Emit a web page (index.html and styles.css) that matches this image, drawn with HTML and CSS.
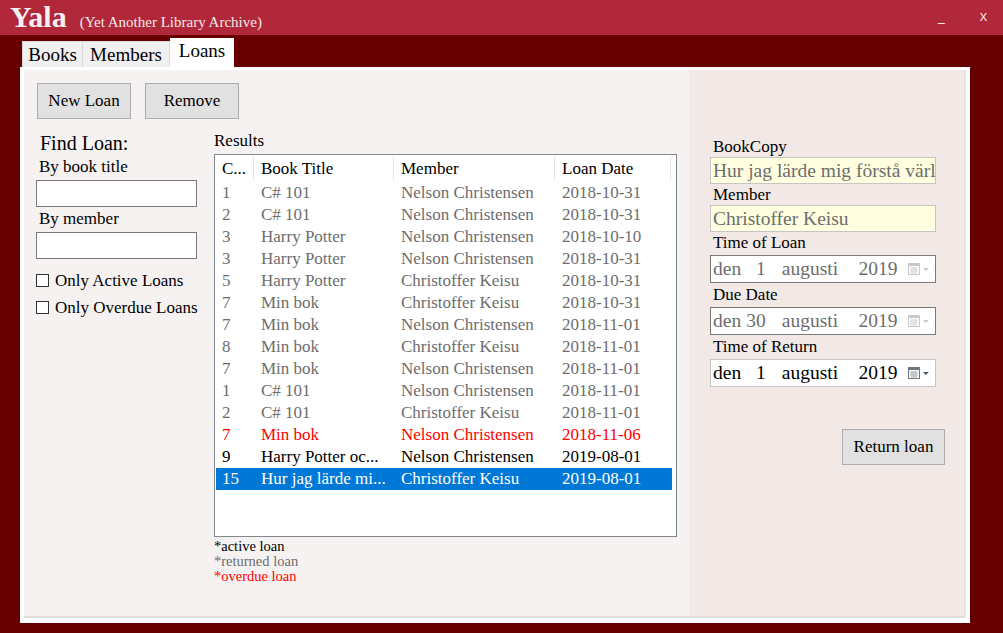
FILE: index.html
```html
<!DOCTYPE html>
<html>
<head>
<meta charset="utf-8">
<title>Yala</title>
<link rel="stylesheet" href="styles.css">
</head>
<body>
<div class="titlebar">
  <span class="app-name">Yala</span>
  <span class="app-sub">(Yet Another Library Archive)</span>
  <span class="win-min">_</span>
  <span class="win-close">X</span>
</div>
<div class="tabs">
  <div class="tab tab-books">Books</div>
  <div class="tab tab-members">Members</div>
  <div class="tab tab-loans active">Loans</div>
</div>
<div class="panel">
  <div class="main">
    <div class="btn-row">
      <button class="btn">New Loan</button>
      <button class="btn">Remove</button>
    </div>
    <div class="work">
      <div class="find">
        <div class="find-title">Find Loan:</div>
        <div class="flabel">By book title</div>
        <div class="tbox"></div>
        <div class="flabel">By member</div>
        <div class="tbox"></div>
        <div class="check"><span class="cbox"></span>Only Active Loans</div>
        <div class="check"><span class="cbox"></span>Only Overdue Loans</div>
      </div>
      <div class="results">
        <div class="rlabel">Results</div>
        <div class="list">
          <div class="lrow head">
            <span class="c1">C...</span><span class="c2">Book Title</span><span class="c3">Member</span><span class="c4">Loan Date</span>
          </div>
          <div class="lrow ret"><span class="c1">1</span><span class="c2">C# 101</span><span class="c3">Nelson Christensen</span><span class="c4">2018-10-31</span></div>
          <div class="lrow ret"><span class="c1">2</span><span class="c2">C# 101</span><span class="c3">Nelson Christensen</span><span class="c4">2018-10-31</span></div>
          <div class="lrow ret"><span class="c1">3</span><span class="c2">Harry Potter</span><span class="c3">Nelson Christensen</span><span class="c4">2018-10-10</span></div>
          <div class="lrow ret"><span class="c1">3</span><span class="c2">Harry Potter</span><span class="c3">Nelson Christensen</span><span class="c4">2018-10-31</span></div>
          <div class="lrow ret"><span class="c1">5</span><span class="c2">Harry Potter</span><span class="c3">Christoffer Keisu</span><span class="c4">2018-10-31</span></div>
          <div class="lrow ret"><span class="c1">7</span><span class="c2">Min bok</span><span class="c3">Christoffer Keisu</span><span class="c4">2018-10-31</span></div>
          <div class="lrow ret"><span class="c1">7</span><span class="c2">Min bok</span><span class="c3">Nelson Christensen</span><span class="c4">2018-11-01</span></div>
          <div class="lrow ret"><span class="c1">8</span><span class="c2">Min bok</span><span class="c3">Christoffer Keisu</span><span class="c4">2018-11-01</span></div>
          <div class="lrow ret"><span class="c1">7</span><span class="c2">Min bok</span><span class="c3">Nelson Christensen</span><span class="c4">2018-11-01</span></div>
          <div class="lrow ret"><span class="c1">1</span><span class="c2">C# 101</span><span class="c3">Nelson Christensen</span><span class="c4">2018-11-01</span></div>
          <div class="lrow ret"><span class="c1">2</span><span class="c2">C# 101</span><span class="c3">Christoffer Keisu</span><span class="c4">2018-11-01</span></div>
          <div class="lrow over"><span class="c1">7</span><span class="c2">Min bok</span><span class="c3">Nelson Christensen</span><span class="c4">2018-11-06</span></div>
          <div class="lrow act"><span class="c1">9</span><span class="c2">Harry Potter oc...</span><span class="c3">Nelson Christensen</span><span class="c4">2019-08-01</span></div>
          <div class="lrow sel"><span class="c1">15</span><span class="c2">Hur jag lärde mi...</span><span class="c3">Christoffer Keisu</span><span class="c4">2019-08-01</span></div>
        </div>
        <div class="legend">
          <div class="lg-act">*active loan</div>
          <div class="lg-ret">*returned loan</div>
          <div class="lg-over">*overdue loan</div>
        </div>
      </div>
    </div>
  </div>
  <div class="side">
    <div class="slabel">BookCopy</div>
    <div class="ybox">Hur jag lärde mig förstå värl</div>
    <div class="slabel">Member</div>
    <div class="ybox">Christoffer Keisu</div>
    <div class="slabel">Time of Loan</div>
    <div class="picker off">
      <span class="p-den">den</span><span class="p-day">1</span><span class="p-mon">augusti</span><span class="p-year">2019</span>
      <svg class="p-ico" width="22" height="13" viewBox="0 0 22 13"><rect x="0.5" y="0.5" width="11" height="11" fill="#fff" stroke="currentColor"/><rect x="1" y="1" width="10" height="2" fill="currentColor"/><path d="M2 5h8M2 7h8M2 9h8M4 4v7M6 4v7M8 4v7" stroke="currentColor" stroke-width="0.6" fill="none"/><path d="M15 5h6l-3 3z" fill="currentColor"/></svg>
    </div>
    <div class="slabel">Due Date</div>
    <div class="picker off">
      <span class="p-den">den</span><span class="p-day">30</span><span class="p-mon">augusti</span><span class="p-year">2019</span>
      <svg class="p-ico" width="22" height="13" viewBox="0 0 22 13"><rect x="0.5" y="0.5" width="11" height="11" fill="#fff" stroke="currentColor"/><rect x="1" y="1" width="10" height="2" fill="currentColor"/><path d="M2 5h8M2 7h8M2 9h8M4 4v7M6 4v7M8 4v7" stroke="currentColor" stroke-width="0.6" fill="none"/><path d="M15 5h6l-3 3z" fill="currentColor"/></svg>
    </div>
    <div class="slabel">Time of Return</div>
    <div class="picker on">
      <span class="p-den">den</span><span class="p-day">1</span><span class="p-mon">augusti</span><span class="p-year">2019</span>
      <svg class="p-ico" width="22" height="13" viewBox="0 0 22 13"><rect x="0.5" y="0.5" width="11" height="11" fill="#fff" stroke="#6b7380"/><rect x="1" y="1" width="10" height="2" fill="#6b7380"/><path d="M2 5h8M2 7h8M2 9h8M4 4v7M6 4v7M8 4v7" stroke="#8a909a" stroke-width="0.6" fill="none"/><path d="M15 5h6l-3 3z" fill="#4a5060"/></svg>
    </div>
    <div class="ret-row"><button class="btn btn-ret">Return loan</button></div>
  </div>
</div>
</body>
</html>
```
FILE: styles.css
```css
* { box-sizing: border-box; }
html, body { margin: 0; padding: 0; }
body {
  background: #660000;
  width: 1003px;
  height: 633px;
  overflow: hidden;
  font-family: "Liberation Serif", "DejaVu Serif", serif;
  color: #000;
}
.titlebar {
  height: 35px;
  background: #b0283a;
  display: flex;
  align-items: baseline;
  padding-left: 10px;
  color: #fff;
}
.app-name {
  font-weight: bold;
  font-size: 30px;
  line-height: 34px;
  color: #f6f0f0;
}
.app-sub {
  font-size: 15px;
  margin-left: 13px;
  color: #f4eaea;
}
.win-min, .win-close {
  font-family: "Liberation Sans", sans-serif;
  align-self: flex-start;
  line-height: 14px;
  margin-top: 10px;
  color: #fff;
}
.win-min {
  font-size: 12px;
  margin-left: auto;
  margin-right: 35px;
}
.win-close {
  font-size: 11px;
  margin-right: 16px;
}
.tabs {
  display: flex;
  align-items: flex-end;
  height: 32px;
  padding-left: 22px;
}
.tab {
  height: 26px;
  background: #f0f0f0;
  border: 1px solid #d9d9d9;
  border-bottom: none;
  font-size: 19px;
  line-height: 25px;
  text-align: center;
}
.tab-books { width: 61px; }
.tab-members { width: 87px; border-left: none; }
.tab-loans { width: 64px; }
.tab.active {
  height: 29px;
  background: #fff;
  border: none;
  line-height: 25px;
}
.panel {
  margin-left: 20px;
  width: 950px;
  height: 556px;
  background: #fff;
  border-top: 3px solid #fff;
  border-left: 4px solid #fff;
  border-right: 1px solid #fff;
  border-bottom: 2px solid #fff;
  display: flex;
}
.main {
  width: 665px;
  height: 548px;
  background: #f6f2f1;
  padding: 13px 0 0 12px;
  border-bottom: 2px solid #dedede;
}
.side {
  width: 277px;
  height: 548px;
  background: #f2e9e6;
  padding: 66px 0 0 21px;
  border-bottom: 2px solid #dedede;
  border-right: 2px solid #e3e3e3;
}
.btn-row { display: flex; gap: 14px; padding-left: 1px; }
.btn {
  font-family: "Liberation Serif", "DejaVu Serif", serif;
  font-size: 17px;
  background: #e1e1e1;
  border: 1px solid #adadad;
  height: 36px;
  width: 94px;
  padding: 0;
  color: #000;
}
.work { display: flex; margin-top: 12px; }
.find { width: 178px; }
.find-title { font-size: 20px; line-height: 24px; padding-left: 4px; }
.flabel { font-size: 17px; line-height: 20px; padding-left: 3px; margin-top: 2px; }
.tbox {
  width: 161px;
  height: 27px;
  background: #fff;
  border: 1px solid #7a7a7a;
  margin-top: 3px;
}
.check {
  display: flex;
  align-items: center;
  font-size: 17px;
  line-height: 20px;
  height: 27px;
}
.find .tbox + .check { margin-top: 8px; }
.cbox {
  width: 13px;
  height: 13px;
  border: 1px solid #333;
  background: #fff;
  margin-right: 6px;
}
.results { width: 463px; }
.rlabel { font-size: 17px; line-height: 20px; }
.list {
  margin-top: 3px;
  height: 383px;
  background: #fff;
  border: 1px solid #828790;
  padding: 0 4px 0 1px;
}
.lrow {
  display: flex;
  height: 22px;
  align-items: center;
  font-size: 17px;
  white-space: nowrap;
}
.lrow span { display: block; overflow: hidden; }
.lrow .c1 { width: 38px; padding-left: 6px; }
.lrow .c2 { width: 140px; padding-left: 7px; }
.lrow .c3 { width: 161px; padding-left: 7px; }
.lrow .c4 { width: 116px; padding-left: 7px; }
.lrow.head { height: 27px; }
.lrow.head span { border-right: 1px solid #e5e5e5; height: 23px; line-height: 23px; }
.ret { color: #6d6d6d; }
.over { color: #ff0000; }
.act { color: #000; }
.sel { background: #0078d7; color: #fff; }
.legend { font-size: 14.5px; line-height: 15px; margin-top: 2px; }
.lg-ret { color: #6d6d6d; }
.lg-over { color: #ff0000; }
.slabel {
  font-size: 17px;
  line-height: 21px;
  height: 21px;
  padding-left: 3px;
}
.ybox {
  width: 226px;
  height: 27px;
  background: #ffffe0;
  border: 1px solid #c5c5c5;
  font-size: 19.5px;
  line-height: 25px;
  color: #6d6d6d;
  padding-left: 2px;
  white-space: nowrap;
  overflow: hidden;
}
.picker {
  width: 226px;
  height: 28px;
  margin: 2px 0 1px;
  background: #fff;
  border: 1px solid #7a7a7a;
  display: flex;
  align-items: center;
  font-size: 19.5px;
  white-space: nowrap;
  padding-left: 2px;
}
.picker.off { color: #6d6d6d; }
.picker.off .p-ico { color: #c8c8c8; }
.picker.on { border-color: #c5c5c5; color: #000; }
.p-den { width: 33px; }
.p-day { width: 20px; text-align: right; }
.p-mon { width: 77px; margin-left: 16px; }
.p-year { width: 50px; }
.p-ico { margin-left: auto; margin-right: 5px; }
.ret-row { margin-top: 42px; display: flex; justify-content: flex-end; width: 235px; }
.btn-ret { width: 103px; }
```
